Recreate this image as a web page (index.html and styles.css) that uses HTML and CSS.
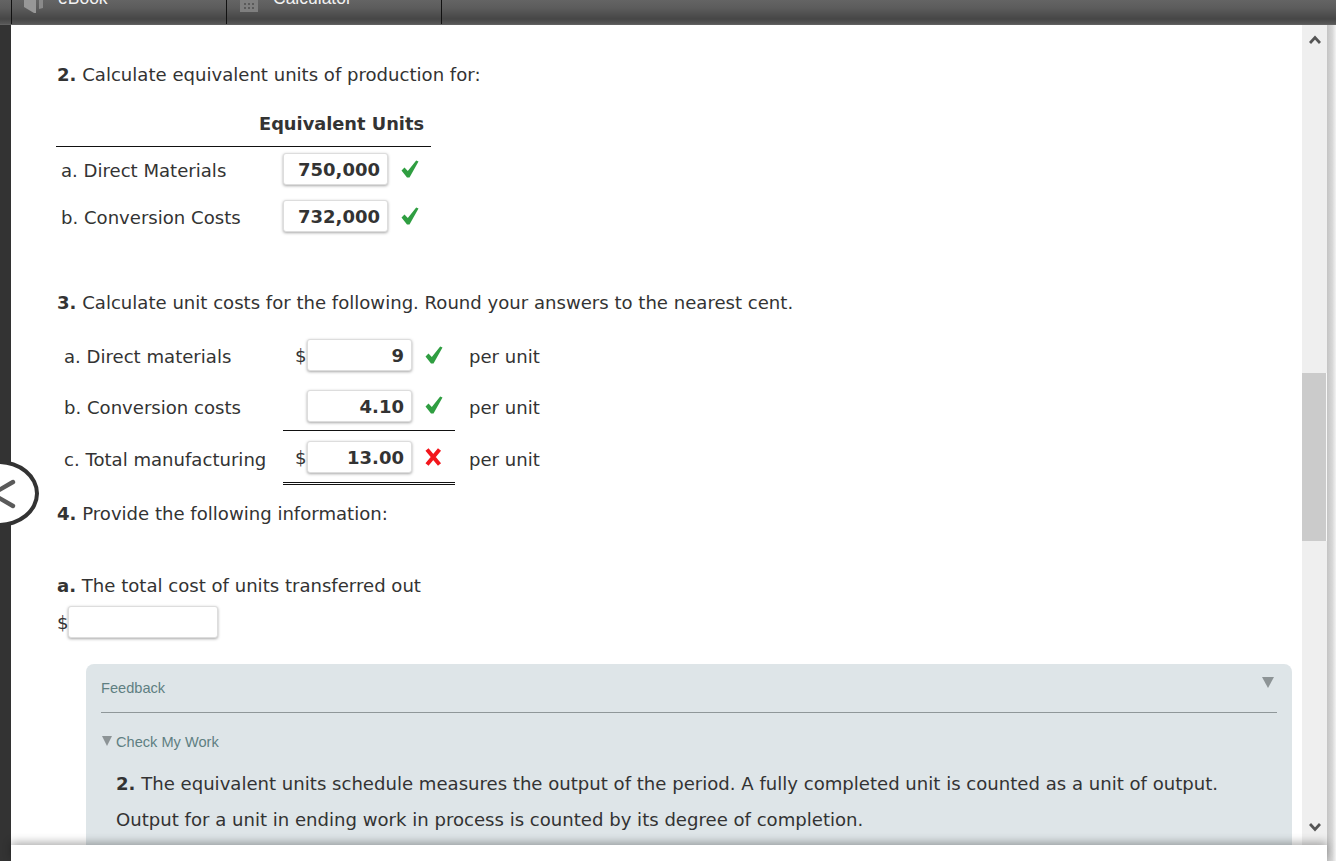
FILE: index.html
```html
<!DOCTYPE html>
<html lang="en">
<head>
<meta charset="utf-8">
<title>Equivalent units</title>
<link rel="stylesheet" href="styles.css">
</head>
<body>
<div class="page">
  <header class="topbar">
    <div class="tab">
      <svg class="tab-icon" width="35" height="14" viewBox="0 0 35 14"><path d="M1 0H13V13H11L1 7Z" fill="#979797"/><path d="M16 0H20V8L16 9Z" fill="#8a8a8a"/></svg>
      <span class="tab-label">eBook</span>
    </div>
    <div class="tab">
      <svg class="tab-icon" width="35" height="14" viewBox="0 0 35 14"><rect x="2" y="0" width="18" height="12" fill="#7f7f7f"/><path d="M6 3h2v2H6zM10 3h2v2h-2zM14 3h2v2h-2zM6 7h2v2H6zM10 7h2v2h-2zM14 7h2v2h-2z" fill="#5a5a5a"/></svg>
      <span class="tab-label">Calculator</span>
    </div>
  </header>
  <div class="middle">
    <div class="rail"></div>
    <main class="content">
      <p class="heading h2"><b>2.</b> Calculate equivalent units of production for:</p>
      <div class="eq-table">
        <div class="eq-head"><b>Equivalent Units</b></div>
        <div class="eq-row"><span class="eq-label">a. Direct Materials</span><span class="field w105">750,000</span><svg class="mark" viewBox="0 0 18 18"><path d="M0.5 10.5 3.5 7.5 6.8 11 15.2 0.5 17.5 1.5 8.5 17.5H6Z" fill="#2f9e41"/></svg></div>
        <div class="eq-row"><span class="eq-label">b. Conversion Costs</span><span class="field w105">732,000</span><svg class="mark" viewBox="0 0 18 18"><path d="M0.5 10.5 3.5 7.5 6.8 11 15.2 0.5 17.5 1.5 8.5 17.5H6Z" fill="#2f9e41"/></svg></div>
      </div>
      <p class="heading h3"><b>3.</b> Calculate unit costs for the following. Round your answers to the nearest cent.</p>
      <div class="cost-table">
        <div class="cost-row">
          <span class="cost-label">a. Direct materials</span>
          <div class="cost-cell"><span class="cur">$</span><span class="field w105">9</span><svg class="mark" viewBox="0 0 18 18"><path d="M0.5 10.5 3.5 7.5 6.8 11 15.2 0.5 17.5 1.5 8.5 17.5H6Z" fill="#2f9e41"/></svg></div>
          <span class="per">per unit</span>
        </div>
        <div class="cost-row">
          <span class="cost-label">b. Conversion costs</span>
          <div class="cost-cell rule-single"><span class="cur"></span><span class="field w105">4.10</span><svg class="mark" viewBox="0 0 18 18"><path d="M0.5 10.5 3.5 7.5 6.8 11 15.2 0.5 17.5 1.5 8.5 17.5H6Z" fill="#2f9e41"/></svg></div>
          <span class="per">per unit</span>
        </div>
        <div class="cost-row tall">
          <span class="cost-label low">c. Total manufacturing</span>
          <div class="cost-cell rule-double"><span class="cur">$</span><span class="field w105">13.00</span><svg class="mark" viewBox="0 0 18 18"><path d="M2 1.5 14.5 16.5M14.5 1.5 2 16.5" fill="none" stroke="#f3161c" stroke-width="4"/></svg></div>
          <span class="per low">per unit</span>
        </div>
      </div>
      <p class="heading h4"><b>4.</b> Provide the following information:</p>
      <p class="heading ha"><b>a.</b> The total cost of units transferred out</p>
      <div class="total-row"><span class="cur-total">$</span><span class="field w150"></span></div>
      <section class="feedback">
        <div class="fb-head">
          <span class="fb-title">Feedback</span>
          <svg class="tri" width="12" height="11" viewBox="0 0 12 11"><path d="M0 0H12L6 11Z" fill="#8d9496"/></svg>
        </div>
        <div class="fb-check">
          <svg class="tri-small" width="10" height="10" viewBox="0 0 10 10"><path d="M0 0H10L5 10Z" fill="#8d9496"/></svg>
          <span class="fb-title">Check My Work</span>
        </div>
        <p class="fb-text"><b>2.</b> The equivalent units schedule measures the output of the period. A fully completed unit is counted as a unit of output.<br>Output for a unit in ending work in process is counted by its degree of completion.</p>
      </section>
    </main>
    <div class="scrollbar">
      <svg class="sb-arrow" width="12" height="9" viewBox="0 0 12 9"><path d="M1 8 6 2.5l5 5.5" fill="none" stroke="#555" stroke-width="2.8"/></svg>
      <div class="sb-track"><div class="sb-thumb"></div></div>
      <svg class="sb-arrow" width="12" height="9" viewBox="0 0 12 9"><path d="M1 1l5 5.5L11 1" fill="none" stroke="#555" stroke-width="2.8"/></svg>
    </div>
    <div class="edge"></div>
  </div>
  <div class="nav-back">
    <svg width="20" height="34" viewBox="0 0 20 34"><path d="M19 5 -2 17 19 29" fill="none" stroke="#5a5a5a" stroke-width="4.4" stroke-linecap="round" stroke-linejoin="round"/></svg>
  </div>
  <footer class="footer"></footer>
</div>
</body>
</html>
```
FILE: styles.css
```css
* { box-sizing: border-box; }
html, body { margin: 0; padding: 0; height: 100%; overflow: hidden; background: #fff; }
body { font-family: "DejaVu Sans", Verdana, sans-serif; font-size: 18.08px; color: #333; }
.page { position: relative; display: flex; flex-direction: column; width: 1336px; height: 861px; overflow: hidden; }

.topbar { display: flex; flex: none; height: 25px; padding-left: 11px; overflow: hidden;
  background: linear-gradient(#646464 0, #5c5c5c 8px, #464646 19px, #585858 24px, #6a6a6a 25px); }
.tab { display: flex; align-items: flex-start; width: 215px; height: 24px; padding-left: 11px; border-left: 1px solid #111; }
.tab:last-child { border-right: 1px solid #111; width: 216px; }
.tab-icon { flex: none; }
.tab-label { margin-top: -12px; font-family: "Liberation Sans", Arial, sans-serif; font-size: 17.5px; line-height: 20px; color: #f2f2f2; }

.middle { display: flex; flex: 1; min-height: 0; }
.rail { flex: none; width: 11px; background: #333; }
.content { flex: 1; min-width: 0; padding-left: 46px; overflow: hidden; background: #fff; }
.heading { margin: 0; line-height: 20px; white-space: nowrap; }
.h2 { margin-top: 40px; }
.h3 { margin-top: 52px; }
.h4 { margin-top: 19px; }
.ha { margin-top: 52px; }

.eq-table { width: 375px; margin-top: 28px; margin-left: -1px; }
.eq-head { height: 34px; padding: 1px 7px 0 0; line-height: 20px; text-align: right; border-bottom: 1px solid #111; font-size: 17.8px; }
.eq-row { display: flex; align-items: center; height: 47px; padding: 0 0 3px 5px; }
.eq-label { width: 222px; margin-top: 2px; }

.field { display: block; flex: none; height: 32px; padding-right: 7px; background: #fff; border-radius: 3px;
  border: 1px solid #ddd; box-shadow: 0 1px 3px rgba(0,0,0,.35);
  font-weight: 700; font-size: 18px; line-height: 31px; text-align: right; color: #333; }
.w105 { width: 105px; }
.w150 { width: 150px; }
.mark { flex: none; width: 18px; height: 18px; margin-left: 13px; margin-top: -1px; }

.cost-table { margin-top: 16px; }
.cost-row { display: flex; align-items: flex-start; height: 51px; padding-left: 7px; }
.cost-row.tall { height: 54px; }
.cost-label { width: 219px; margin-top: 18px; line-height: 20px; }
.cost-cell { display: flex; align-items: center; align-self: stretch; width: 172px; height: 51px; padding-bottom: 9px; padding-top: 10px; }
.cur { width: 24px; flex: none; padding-left: 12px; }
.per { margin-top: 18px; margin-left: 14px; line-height: 20px; }
.cost-label.low, .per.low { margin-top: 19px; }
.rule-single { border-bottom: 1px solid #111; }
.rule-double { height: 54px; border-bottom: 3px double #111; }

.total-row { display: flex; align-items: center; margin-top: 10px; }
.cur-total { width: 11px; }

.feedback { width: 1206px; height: 220px; margin-top: 26px; margin-left: 29px; padding: 0 15px; background: #dee5e8; border-radius: 8px 8px 0 0; }
.fb-head { display: flex; align-items: flex-start; justify-content: space-between; height: 49px; padding: 15px 3px 0 0; border-bottom: 1px solid #8f9799; }
.fb-title { font-family: "Liberation Sans", Arial, sans-serif; font-size: 14.6px; line-height: 18px; color: #5f7f82; }
.tri { margin-top: -2px; }
.fb-check { display: flex; align-items: center; height: 18px; margin-top: 20px; padding-left: 1px; }
.tri-small { margin-right: 4px; margin-top: -3px; }
.fb-text { margin: 15px 0 0 15px; line-height: 36px; white-space: nowrap; }

.scrollbar { display: flex; flex: none; flex-direction: column; width: 25px; background: #efefef; }
.sb-arrow { flex: none; margin: 10px auto 0; }
.sb-track { flex: 1; padding-top: 329px; }
.sb-thumb { width: 25px; height: 168px; background: #cbcbcb; border-right: 1px solid #f8f8f8; }
.sb-track + .sb-arrow { margin: 0 auto 29px; }
.edge { flex: none; width: 9px; background: linear-gradient(90deg, #c4c4c4, #d8d8d8 60%, #f4f4f4); }

.nav-back { position: absolute; left: -42px; top: 460px; display: flex; align-items: center; justify-content: flex-end; width: 81px; height: 67px; padding-right: 21px; background: #fff; border: 4px solid #333; border-radius: 50%; }
.nav-back svg { overflow: visible; flex: none; }

.footer { position: absolute; left: 11px; right: 9px; bottom: 0; height: 16px; background: #fff; box-shadow: 0 -3px 8px rgba(0,0,0,.3); }
```
